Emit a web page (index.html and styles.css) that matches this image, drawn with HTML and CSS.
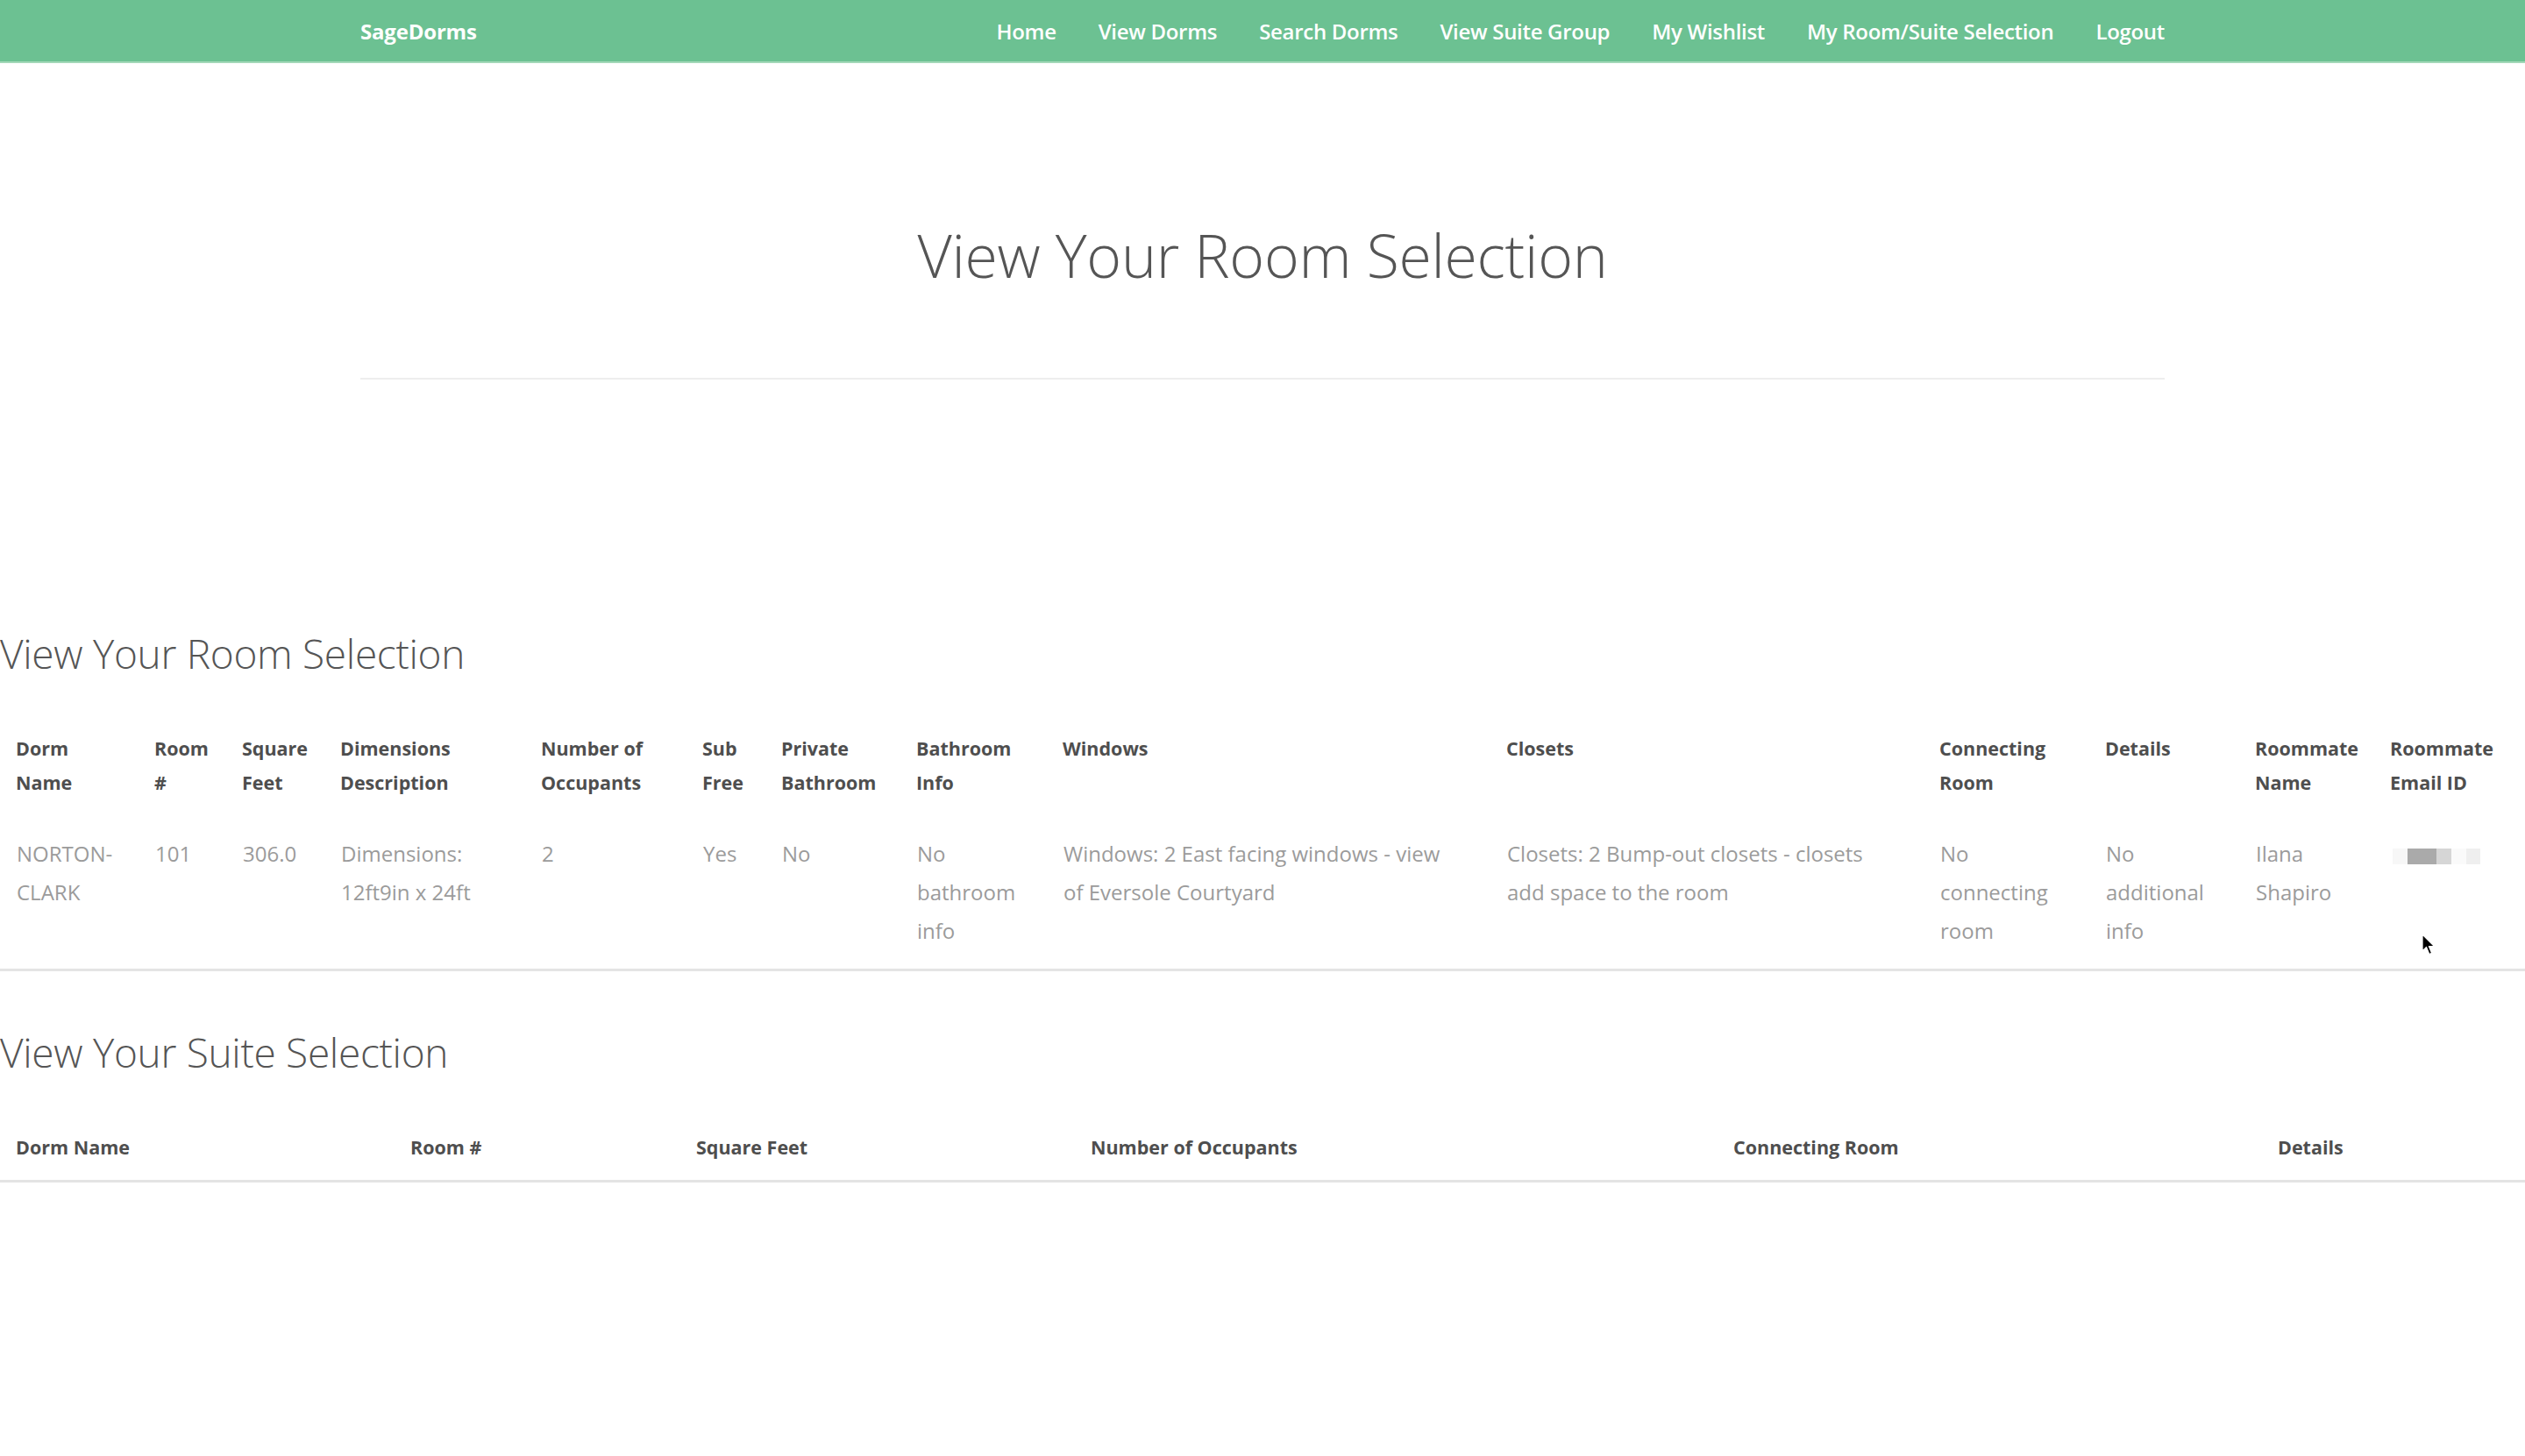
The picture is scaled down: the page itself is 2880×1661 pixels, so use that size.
FILE: index.html
```html
<!DOCTYPE html>
<html lang="en">
<head>
<meta charset="utf-8">
<title>SageDorms - My Room/Suite Selection</title>
<link rel="stylesheet" href="styles.css">
</head>
<body>
<nav class="navbar">
  <div class="nav-inner">
    <a class="brand" href="#">SageDorms</a>
    <ul class="nav-links">
      <li><a href="#">Home</a></li>
      <li><a href="#">View Dorms</a></li>
      <li><a href="#">Search Dorms</a></li>
      <li><a href="#">View Suite Group</a></li>
      <li><a href="#">My Wishlist</a></li>
      <li><a href="#">My Room/Suite Selection</a></li>
      <li><a href="#">Logout</a></li>
    </ul>
  </div>
</nav>

<header class="page-header">
  <h1>View Your Room Selection</h1>
</header>

<section class="room-section">
  <h2>View Your Room Selection</h2>
  <table class="table">
    <colgroup>
      <col class="w158"><col class="w100"><col class="w112"><col class="w229"><col class="w184"><col class="w90"><col class="w154"><col class="w167"><col class="w506"><col class="w494"><col class="w189"><col class="w171"><col class="w154"><col class="w172">
    </colgroup>
    <thead>
      <tr>
        <th>Dorm Name</th>
        <th>Room #</th>
        <th>Square Feet</th>
        <th>Dimensions Description</th>
        <th>Number of Occupants</th>
        <th>Sub Free</th>
        <th>Private Bathroom</th>
        <th>Bathroom Info</th>
        <th>Windows</th>
        <th>Closets</th>
        <th>Connecting Room</th>
        <th>Details</th>
        <th>Roommate Name</th>
        <th>Roommate Email ID</th>
      </tr>
    </thead>
    <tbody>
      <tr>
        <td>NORTON-CLARK</td>
        <td>101</td>
        <td>306.0</td>
        <td>Dimensions: 12ft9in x 24ft</td>
        <td>2</td>
        <td>Yes</td>
        <td>No</td>
        <td>No bathroom info</td>
        <td class="long-text">Windows: 2 East facing windows - view of Eversole Courtyard</td>
        <td class="long-text">Closets: 2 Bump-out closets - closets add space to the room</td>
        <td>No connecting room</td>
        <td>No additional info</td>
        <td>Ilana Shapiro</td>
        <td><span class="blurred" aria-label="hidden email"><span class="px px1"></span><span class="px px2"></span><span class="px px3"></span><span class="px px4"></span><span class="px px5"></span></span></td>
      </tr>
    </tbody>
  </table>
</section>

<section class="suite-section">
  <h2>View Your Suite Selection</h2>
  <table class="table">
    <colgroup>
      <col class="w450"><col class="w326"><col class="w450"><col class="w733"><col class="w621"><col class="w300">
    </colgroup>
    <thead>
      <tr>
        <th>Dorm Name</th>
        <th>Room #</th>
        <th>Square Feet</th>
        <th>Number of Occupants</th>
        <th>Connecting Room</th>
        <th>Details</th>
      </tr>
    </thead>
    <tbody></tbody>
  </table>
</section>

<svg class="cursor" width="16" height="26" viewBox="0 0 16 26" aria-hidden="true">
  <path d="M1 1 L1 20 L5.5 15.5 L8.8 23.5 L11.6 22.3 L8.4 14.6 L14.5 14.6 Z" fill="#000" stroke="#fff" stroke-width="1.2" stroke-linejoin="round"/>
</svg>
</body>
</html>
```

FILE: styles.css
```css
* { box-sizing: border-box; }

html, body {
  margin: 0;
  padding: 0;
  background: #ffffff;
}

body {
  font-family: "Open Sans", "DejaVu Sans", sans-serif;
  color: #555555;
  width: 2880px;
  min-height: 1661px;
  padding-bottom: 1px;
}

/* ---------- navbar ---------- */
.navbar {
  height: 72px;
  background: #6cc192;
  border-bottom: 2px solid #a3d8b8;
}

.nav-inner {
  width: 2058px;
  height: 70px;
  margin: 0 auto;
  display: flex;
  align-items: center;
  justify-content: space-between;
}

.brand {
  color: #ffffff;
  font-size: 24px;
  font-weight: 700;
  text-decoration: none;
  letter-spacing: -0.2px;
}

.nav-links {
  list-style: none;
  margin: 0;
  padding: 0;
  display: flex;
  gap: 48px;
}

.nav-links a {
  color: #ffffff;
  font-size: 24px;
  font-weight: 600;
  text-decoration: none;
  letter-spacing: -0.3px;
}

/* ---------- page header ---------- */
.page-header {
  width: 2058px;
  margin: 180px auto 0;
  padding-bottom: 102px;
  border-bottom: 2px solid #eeeeee;
}

.page-header h1 {
  margin: 0;
  font-size: 68px;
  line-height: 77px;
  font-weight: 300;
  text-align: center;
  color: #555555;
  letter-spacing: -0.3px;
}

/* ---------- sections ---------- */
.room-section {
  margin-top: 286px;
}

.suite-section {
  margin-top: 66px;
}

section h2 {
  margin: 0 0 45px;
  font-size: 46px;
  line-height: 52px;
  font-weight: 300;
  color: #555555;
  letter-spacing: -0.3px;
}

/* ---------- tables ---------- */
.table {
  width: 2880px;
  border-collapse: collapse;
  table-layout: fixed;
  border-bottom: 3px solid #e4e4e4;
}

.table th {
  text-align: left;
  vertical-align: top;
  font-size: 21.5px;
  line-height: 39px;
  font-weight: 700;
  color: #4e4e4e;
  padding: 18px 18px 18px 18px;
}

.table td {
  vertical-align: top;
  font-size: 24px;
  line-height: 44px;
  font-weight: 400;
  color: #9b9b9b;
  padding: 22px 18px 21px 19px;
}

.table td.long-text {
  padding-right: 42px;
}

.w90 { width: 90px; }
.w100 { width: 100px; }
.w112 { width: 112px; }
.w154 { width: 154px; }
.w158 { width: 158px; }
.w167 { width: 167px; }
.w171 { width: 171px; }
.w172 { width: 172px; }
.w184 { width: 184px; }
.w189 { width: 189px; }
.w229 { width: 229px; }
.w300 { width: 300px; }
.w326 { width: 326px; }
.w450 { width: 450px; }
.w494 { width: 494px; }
.w506 { width: 506px; }
.w621 { width: 621px; }
.w733 { width: 733px; }

/* blurred email */
.blurred {
  display: inline-flex;
  height: 18px;
  vertical-align: -3px;
  margin-left: 2px;
}

.px { display: block; height: 18px; }
.px1 { width: 17px; background: #f7f7f7; }
.px2 { width: 33px; background: #aaaaaa; }
.px3 { width: 17px; background: #d6d6d6; }
.px4 { width: 17px; background: #fafafa; }
.px5 { width: 16px; background: #efefef; }

/* mouse pointer overlay */
.cursor {
  position: absolute;
  left: 2762px;
  top: 1065px;
}
```
